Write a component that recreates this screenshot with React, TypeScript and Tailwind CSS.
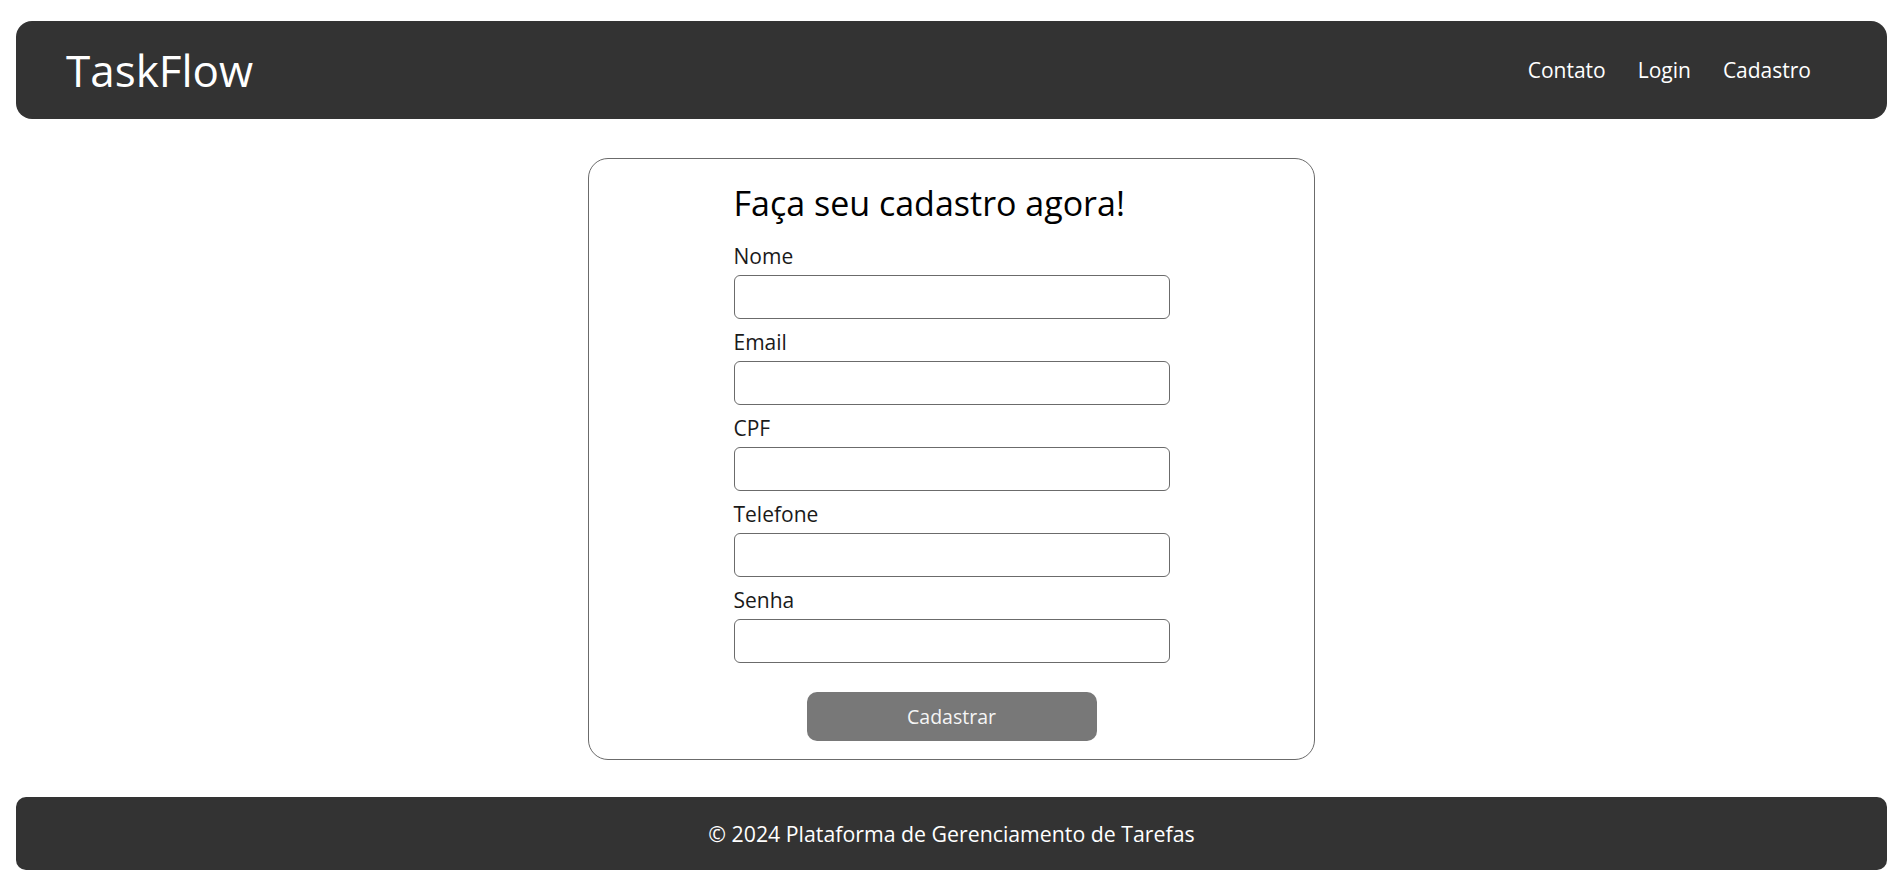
import React from 'react';

const fields = ['Nome', 'Email', 'CPF', 'Telefone', 'Senha'];

const App = () => {
  return (
    <div className="bg-white min-h-screen pt-[21px] pb-[25px] font-['Open_Sans',sans-serif]">
      {/* Header */}
      <header className="mx-4 h-[98px] rounded-2xl bg-[#333333] flex items-center justify-between pl-[50px] pr-[76px]">
        <h1 className="text-[44px] leading-none text-white">TaskFlow</h1>
        <nav className="flex items-center gap-[32px] text-[21px] text-white pt-[2px]">
          <a href="#">Contato</a>
          <a href="#">Login</a>
          <a href="#">Cadastro</a>
        </nav>
      </header>

      {/* Form card */}
      <main className="mt-[39px]">
        <div className="mx-auto w-[727px] rounded-[20px] border border-[#6b6b6b] pt-[24px] pb-[18px]">
          <form className="mx-auto w-[436px]" onSubmit={(e) => e.preventDefault()}>
            <h2 className="text-[34px] leading-[40px] text-black mb-[21px]">Faça seu cadastro agora!</h2>
            {fields.map((field) => (
              <div key={field} className="mb-[11px] last:mb-0">
                <label className="block text-[21px] leading-[24px] text-[#1a1a1a] mb-[7px]">{field}</label>
                <input
                  type={field === 'Senha' ? 'password' : 'text'}
                  className="block w-full h-[44px] rounded-[6px] border border-[#6b6b6b] bg-white px-2 outline-none"
                />
              </div>
            ))}
            <button
              type="submit"
              className="block mx-auto mt-[29px] w-[290px] h-[49px] rounded-[10px] bg-[#787878] text-[19.5px] text-[#f5f5f5]"
            >
              Cadastrar
            </button>
          </form>
        </div>
      </main>

      {/* Footer */}
      <footer className="mx-4 mt-[37px] h-[73px] rounded-[10px] bg-[#333333] flex items-center justify-center">
        <p className="text-[21.3px] text-white">© 2024 Plataforma de Gerenciamento de Tarefas</p>
      </footer>
    </div>
  );
};

export default App;
